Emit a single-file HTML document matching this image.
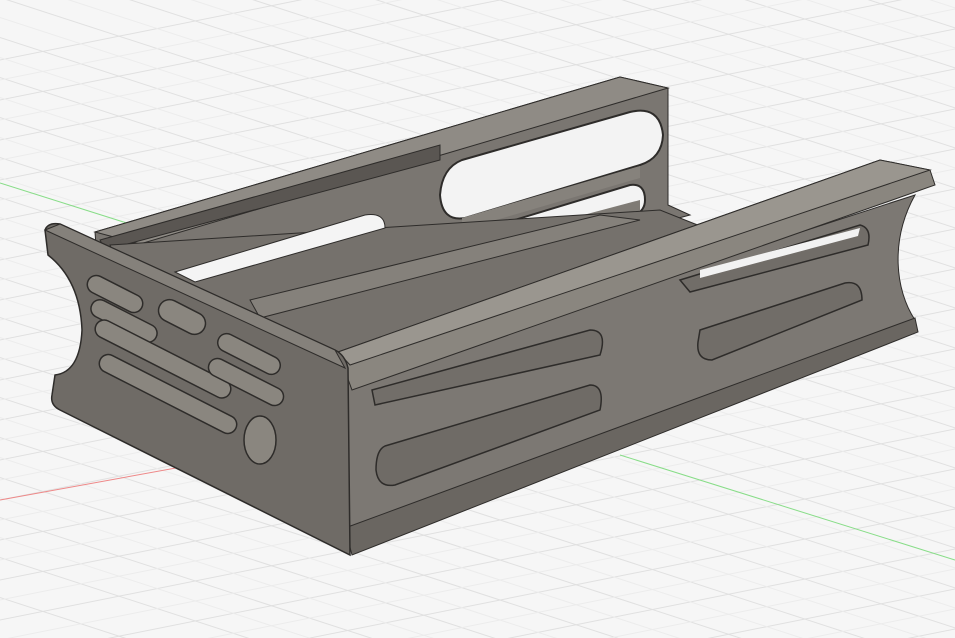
<!DOCTYPE html>
<html><head><style>
html,body{margin:0;padding:0;background:#f5f5f5;overflow:hidden;width:955px;height:638px;}
svg{display:block}
</style></head><body>
<svg width="955" height="638" viewBox="0 0 955 638" xmlns="http://www.w3.org/2000/svg">
<rect width="955" height="638" fill="#f6f6f6"/>
<g stroke="#e0e0e0" stroke-width="1">
<path d="M-300,-60 L1300,460 M-300,-20 L1300,500 M-300,20 L1300,540 M-300,60 L1300,580 M-300,100 L1300,620 M-300,140 L1300,660 M-300,180 L1300,700 M-300,220 L1300,740 M-300,260 L1300,780 M-300,300 L1300,820 M-300,340 L1300,860 M-300,380 L1300,900 M-300,420 L1300,940 M-300,460 L1300,980 M-300,500 L1300,1020 M-300,-100 L1300,420 M-300,-140 L1300,380 M-300,-180 L1300,340 M-300,-220 L1300,300 M-300,-260 L1300,260 M-300,-300 L1300,220 M-300,-340 L1300,180 M-300,-380 L1300,140 M-300,-420 L1300,100 M-300,-460 L1300,60 M-300,-500 L1300,20 M-300,-540 L1300,-20"/>
<path d="M-100,80 L1100,-160 M-100,120 L1100,-120 M-100,160 L1100,-80 M-100,200 L1100,-40 M-100,240 L1100,0 M-100,280 L1100,40 M-100,320 L1100,80 M-100,360 L1100,120 M-100,400 L1100,160 M-100,440 L1100,200 M-100,480 L1100,240 M-100,520 L1100,280 M-100,560 L1100,320 M-100,600 L1100,360 M-100,640 L1100,400 M-100,680 L1100,440 M-100,720 L1100,480 M-100,760 L1100,520 M-100,800 L1100,560 M-100,840 L1100,600 M-100,880 L1100,640 M-100,920 L1100,680 M-100,960 L1100,720"/>
</g>
<g stroke="#ececec" stroke-width="1">
<path d="M-300,0 L1300,520 M-300,40 L1300,560 M-300,80 L1300,600 M-300,120 L1300,640 M-300,160 L1300,680 M-300,200 L1300,720 M-300,240 L1300,760 M-300,280 L1300,800 M-300,320 L1300,840 M-300,360 L1300,880 M-300,400 L1300,920 M-300,440 L1300,960 M-300,-40 L1300,480 M-300,-80 L1300,440 M-300,-120 L1300,400 M-300,-160 L1300,360 M-300,-200 L1300,320 M-300,-240 L1300,280 M-300,-280 L1300,240 M-300,-320 L1300,200 M-300,-360 L1300,160 M-300,-400 L1300,120 M-300,-440 L1300,80 M-300,-480 L1300,40"/>
<path d="M-100,100 L1100,-140 M-100,140 L1100,-100 M-100,180 L1100,-60 M-100,220 L1100,-20 M-100,260 L1100,20 M-100,300 L1100,60 M-100,340 L1100,100 M-100,380 L1100,140 M-100,420 L1100,180 M-100,460 L1100,220 M-100,500 L1100,260 M-100,540 L1100,300 M-100,580 L1100,340 M-100,620 L1100,380 M-100,660 L1100,420 M-100,700 L1100,460 M-100,740 L1100,500 M-100,780 L1100,540 M-100,820 L1100,580 M-100,860 L1100,620 M-100,900 L1100,660 M-100,940 L1100,700"/>
</g>
<path d="M0,500 L330,440" stroke="#e88" stroke-width="1"/>
<path d="M0,183 L250,262 M620,455 L955,560" stroke="#8d8" stroke-width="1"/>

<!-- back wall -->
<polygon points="95,232 620,77 668,88 668,205 690,215 455,278 100,300" fill="#7a7671" stroke="#2e2c2a"/>
<polygon points="95,232 620,77 668,88 140,244" fill="#8f8b85" stroke="#2e2c2a"/>
<path d="M100,240 L440,145 L440,160 L105,250Z" fill="#5a5652" stroke="#2e2c2a"/>
<!-- back slots -->
<path d="M462,160 L630,112 Q660,105 663,135 Q662,158 640,165 L465,218 Q442,222 440,195 Q442,168 462,160Z" fill="#f3f3f3" stroke="#2e2c2a" stroke-width="2"/>
<path d="M462,218 L640,166 L640,178 L462,230Z" fill="#86827c"/>
<path d="M475,232 L630,185 Q645,183 645,200 Q645,212 632,216 L475,265 Q457,268 456,250 Q457,236 475,232Z" fill="#f3f3f3" stroke="#2e2c2a" stroke-width="2"/>
<path d="M470,245 L640,200 L640,215 L470,262Z" fill="#7f7b75"/>
<!-- floor/interior -->
<polygon points="110,245 660,210 760,250 345,380 120,270" fill="#75716c" stroke="#2e2c2a"/>
<path d="M175,272 L365,215 Q385,212 385,228 L195,282Z" fill="#f4f4f4" stroke="#2e2c2a"/>
<polygon points="720,258 790,252 360,390 345,380" fill="#f0f0f0"/>
<polygon points="250,300 600,215 640,220 260,318" fill="#85817b" stroke="#2e2c2a"/>

<!-- right side wall outer face -->
<path d="M345,380 L915,195 C890,240 895,290 915,320 L350,530 C290,480 290,430 345,380 Z" fill="#7c7873" stroke="#2e2c2a"/>
<path d="M318,400 C295,440 300,500 350,530 L360,545 C300,510 290,440 318,400Z" fill="#5a5652"/>
<!-- recessed slots -->
<path d="M385,446 L590,385 Q605,385 600,410 L395,485 Q378,488 376,470 Q376,450 385,446Z" fill="#6f6b66" stroke="#2e2c2a" stroke-width="1.5"/>
<path d="M372,390 L590,330 Q608,330 600,355 L375,405 Z" fill="#726e69" stroke="#2e2c2a" stroke-width="1.5"/>
<path d="M700,330 L845,283 Q862,280 862,300 L712,360 Q696,360 698,342Z" fill="#716d68" stroke="#2e2c2a" stroke-width="1.5"/>
<path d="M680,280 L860,225 Q872,228 868,245 L690,292 Z" fill="#716d68" stroke="#2e2c2a" stroke-width="1.5"/>
<path d="M700,270 L860,228 L858,236 L700,278Z" fill="#f2f2f2"/>
<!-- bottom rail -->
<polygon points="345,528 915,318 918,332 352,555" fill="#6a6661" stroke="#2e2c2a"/>
<!-- top rail -->
<polygon points="338,352 880,160 930,170 935,185 352,390" fill="#8a867f" stroke="#2e2c2a"/>
<polygon points="338,352 880,160 930,170 350,365" fill="#9a968f" stroke="#2e2c2a"/>

<!-- left end plate -->
<path d="M45,230 Q48,222 60,224 L335,350 Q345,355 348,368 L350,555 L60,410 Q50,405 52,395 L55,375 Q80,372 82,330 Q80,280 48,255 Z" fill="#6f6b66" stroke="#2e2c2a" stroke-width="1.5"/>
<polygon points="45,230 60,224 335,350 345,368" fill="#85817b" stroke="#2e2c2a"/>
<g fill="#8a867f" stroke="#2e2c2a" stroke-width="1.5">
<rect x="85" y="285" width="60" height="18" rx="9" transform="rotate(27 115 294)"/>
<rect x="88" y="312" width="72" height="18" rx="9" transform="rotate(27 124 321)"/>
<rect x="88" y="350" width="150" height="18" rx="9" transform="rotate(27 163 359)"/>
<rect x="92" y="385" width="152" height="18" rx="9" transform="rotate(27 168 394)"/>
<rect x="157" y="306" width="50" height="22" rx="11" transform="rotate(27 182 317)"/>
<rect x="215" y="345" width="68" height="18" rx="9" transform="rotate(27 249 354)"/>
<rect x="205" y="373" width="82" height="18" rx="9" transform="rotate(27 246 382)"/>
<ellipse cx="260" cy="440" rx="16" ry="24"/>
</g>
</svg>
</body></html>
